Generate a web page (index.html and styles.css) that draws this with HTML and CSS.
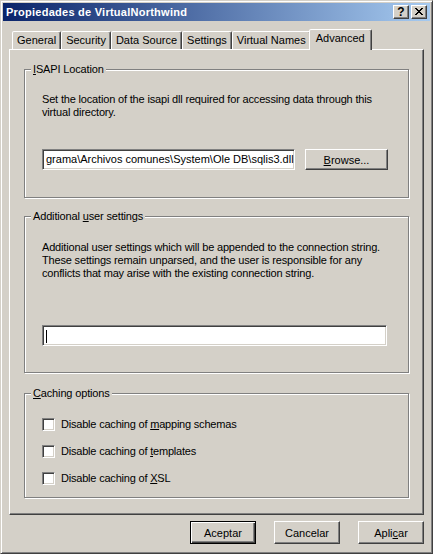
FILE: index.html
```html
<!DOCTYPE html>
<html>
<head>
<meta charset="utf-8">
<title>Propiedades de VirtualNorthwind</title>
<link rel="stylesheet" href="styles.css">
</head>
<body>
<div class="window">
  <div class="titlebar">
    <span class="title">Propiedades de VirtualNorthwind</span>
    <div class="caption-buttons">
      <span class="cap-btn help">?</span>
      <span class="cap-btn close">
        <svg width="8" height="7" viewBox="0 0 8 7" shape-rendering="crispEdges">
          <rect x="0" y="0" width="2" height="1"/><rect x="6" y="0" width="2" height="1"/>
          <rect x="1" y="1" width="2" height="1"/><rect x="5" y="1" width="2" height="1"/>
          <rect x="2" y="2" width="4" height="1"/>
          <rect x="3" y="3" width="2" height="1"/>
          <rect x="2" y="4" width="4" height="1"/>
          <rect x="1" y="5" width="2" height="1"/><rect x="5" y="5" width="2" height="1"/>
          <rect x="0" y="6" width="2" height="1"/><rect x="6" y="6" width="2" height="1"/>
        </svg>
      </span>
    </div>
  </div>
  <div class="client">
    <div class="tabs">
      <div class="tab">General</div>
      <div class="tab">Security</div>
      <div class="tab">Data Source</div>
      <div class="tab">Settings</div>
      <div class="tab">Virtual Names</div>
      <div class="tab active">Advanced</div>
    </div>
    <div class="panel">
      <div class="group group-isapi">
        <div class="group-title"><u>I</u>SAPI Location</div>
        <p class="desc">Set the location of the isapi dll required for accessing data through this<br>virtual directory.</p>
        <div class="row">
          <div class="edit edit-path">grama\Archivos comunes\System\Ole DB\sqlis3.dll</div>
          <div class="btn btn-browse"><span><u>B</u>rowse...</span></div>
        </div>
      </div>
      <div class="group group-user">
        <div class="group-title">Additional <u>u</u>ser settings</div>
        <p class="desc">Additional user settings which will be appended to the connection string.<br>These settings remain unparsed, and the user is responsible for any<br>conflicts that may arise with the existing connection string.</p>
        <div class="edit edit-user"><span class="caret"></span></div>
      </div>
      <div class="group group-cache">
        <div class="group-title"><u>C</u>aching options</div>
        <div class="checks">
          <div class="check-row"><span class="check"></span><span class="check-label">Disable caching of <u>m</u>apping schemas</span></div>
          <div class="check-row"><span class="check"></span><span class="check-label">Disable caching of <u>t</u>emplates</span></div>
          <div class="check-row"><span class="check"></span><span class="check-label">Disable caching of <u>X</u>SL</span></div>
        </div>
      </div>
    </div>
    <div class="buttons">
      <div class="btn btn-dialog default"><span>Aceptar</span></div>
      <div class="btn btn-dialog"><span>Cancelar</span></div>
      <div class="btn btn-dialog"><span>Apli<u>c</u>ar</span></div>
    </div>
  </div>
</div>
</body>
</html>
```

FILE: styles.css
```css
* { box-sizing: border-box; }
html, body { margin: 0; padding: 0; }
body {
  width: 433px;
  height: 554px;
  overflow: hidden;
  background: #d4d0c8;
  font-family: "Liberation Sans", Arial, sans-serif;
  font-size: 11px;
  color: #000;
}
u { text-decoration: underline; text-underline-offset: 1px; }

.window {
  width: 433px;
  height: 554px;
  border: 1px solid;
  border-color: #d4d0c8 #404040 #404040 #d4d0c8;
  box-shadow: inset 1px 1px 0 #fff, inset -1px -1px 0 #808080;
  padding: 2px;
  display: flex;
  flex-direction: column;
}

.titlebar {
  height: 18px;
  flex: none;
  background: linear-gradient(90deg, #0a246a, #a6caf0);
  display: flex;
  align-items: center;
  padding: 0 3px 0 3px;
}
.title {
  flex: 1;
  color: #fff;
  font-weight: bold;
  letter-spacing: 0.25px;
  line-height: 18px;
  white-space: nowrap;
}
.caption-buttons { display: flex; gap: 2px; }
.cap-btn {
  width: 16px;
  height: 14px;
  background: #d4d0c8;
  border: 1px solid;
  border-color: #fff #404040 #404040 #fff;
  box-shadow: inset -1px -1px 0 #808080;
  display: flex;
  align-items: center;
  justify-content: center;
}
.cap-btn.help {
  font-weight: bold;
  font-size: 12px;
  line-height: 12px;
  padding-bottom: 1px;
}
.cap-btn.close svg { display: block; fill: #000; margin-bottom: 1px; }

.client {
  flex: 1;
  display: flex;
  flex-direction: column;
  padding: 8px 6px 7px 6px;
}

.tabs {
  height: 20px;
  flex: none;
  display: flex;
  align-items: flex-end;
  padding-left: 3px;
  position: relative;
  z-index: 1;
}
.tab {
  height: 18px;
  padding: 1px 4px 0 4px;
  line-height: 15px;
  background: #d4d0c8;
  border: 1px solid;
  border-bottom: none;
  border-color: #fff #404040 transparent #fff;
  border-radius: 2px 2px 0 0;
  box-shadow: inset -1px 0 0 #808080;
  white-space: nowrap;
}
.tab.active {
  height: 21px;
  margin: 0 -2px -1px -2px;
  padding: 1px 6px 0 6px;
  position: relative;
}

.panel {
  flex: 1;
  border: 1px solid;
  border-color: #fff #404040 #404040 #fff;
  box-shadow: inset -1px -1px 0 #808080;
  padding: 19px 14px 0 14px;
  display: flex;
  flex-direction: column;
}

.group {
  position: relative;
  flex: none;
  border: 1px solid #808080;
  box-shadow: inset 1px 1px 0 #fff, 1px 1px 0 #fff;
  padding-left: 17px;
}
.group-title {
  position: absolute;
  top: -7px;
  left: 6px;
  padding: 0 2px;
  line-height: 13px;
  letter-spacing: -0.15px;
  background: #d4d0c8;
  white-space: nowrap;
}
.group-isapi { height: 129px; padding-top: 23px; }
.group-user { height: 157px; margin-top: 18px; padding-top: 24px; }
.group-cache { height: 105px; margin-top: 20px; padding-top: 24px; }

.desc {
  margin: 0;
  line-height: 13px;
  letter-spacing: -0.17px;
  white-space: nowrap;
}

.row {
  display: flex;
  gap: 10px;
  margin-top: 30px;
}

.edit {
  height: 21px;
  background: #fff;
  border: 1px solid;
  border-color: #808080 #fff #fff #808080;
  box-shadow: inset 1px 1px 0 #404040, inset -1px -1px 0 #d4d0c8;
  padding: 1px 2px 0 3px;
  line-height: 17px;
  white-space: nowrap;
  overflow: hidden;
}
.edit-path { width: 253px; }
.edit-user { width: 345px; margin-top: 45px; display: flex; align-items: center; }
.caret {
  display: block;
  width: 1px;
  height: 13px;
  background: #000;
}

.btn {
  background: #d4d0c8;
  border: 1px solid;
  border-color: #fff #404040 #404040 #fff;
  box-shadow: inset -1px -1px 0 #808080;
  display: flex;
  align-items: center;
  justify-content: center;
  white-space: nowrap;
}
.btn-browse { width: 83px; height: 21px; }
.btn-dialog { width: 66px; height: 23px; }
.btn.default {
  border-color: #000;
  box-shadow: inset 1px 1px 0 #fff, inset -1px -1px 0 #404040, inset -2px -2px 0 #808080;
}

.checks {
  display: flex;
  flex-direction: column;
  gap: 14px;
}
.check-row {
  display: flex;
  align-items: center;
  gap: 6px;
  height: 13px;
}
.check {
  width: 13px;
  height: 13px;
  flex: none;
  background: #fff;
  border: 1px solid;
  border-color: #808080 #fff #fff #808080;
  box-shadow: inset 1px 1px 0 #404040, inset -1px -1px 0 #d4d0c8;
}
.check-label { line-height: 13px; letter-spacing: -0.2px; white-space: nowrap; }

.buttons {
  flex: none;
  display: flex;
  justify-content: flex-end;
  gap: 18px;
  margin-top: 6px;
}
```
